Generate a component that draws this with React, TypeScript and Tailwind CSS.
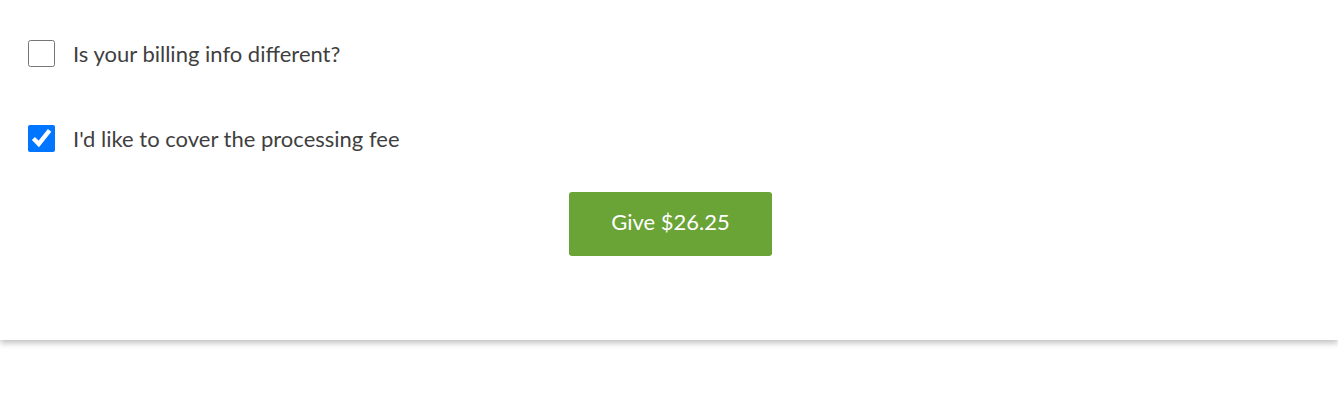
export default function App() {
  return (
    <div className="min-h-[406px] bg-white" style={{ fontFamily: "Lato, 'Liberation Sans', sans-serif" }}>
      <section className="h-[340px] bg-white shadow-[0_3px_6px_rgba(0,0,0,0.25)] px-[28px] pt-[40px]">
        <label className="flex h-[27px] items-center gap-[18px] text-[22px] text-[#3f3f3f]">
          <input type="checkbox" className="m-0 h-[27px] w-[27px]" />
          <span>Is your billing info different?</span>
        </label>

        <label className="mt-[58px] flex h-[27px] items-center gap-[18px] text-[22px] text-[#3f3f3f]">
          <input type="checkbox" defaultChecked className="m-0 h-[27px] w-[27px]" />
          <span>I'd like to cover the processing fee</span>
        </label>

        <div className="mt-[40px] flex justify-center">
          <button
            type="button"
            className="ml-[3px] h-[64px] w-[203px] rounded-[3px] bg-[#6aa336] pb-[6px] text-[22px] text-white"
          >
            Give $26.25
          </button>
        </div>
      </section>
    </div>
  );
}
